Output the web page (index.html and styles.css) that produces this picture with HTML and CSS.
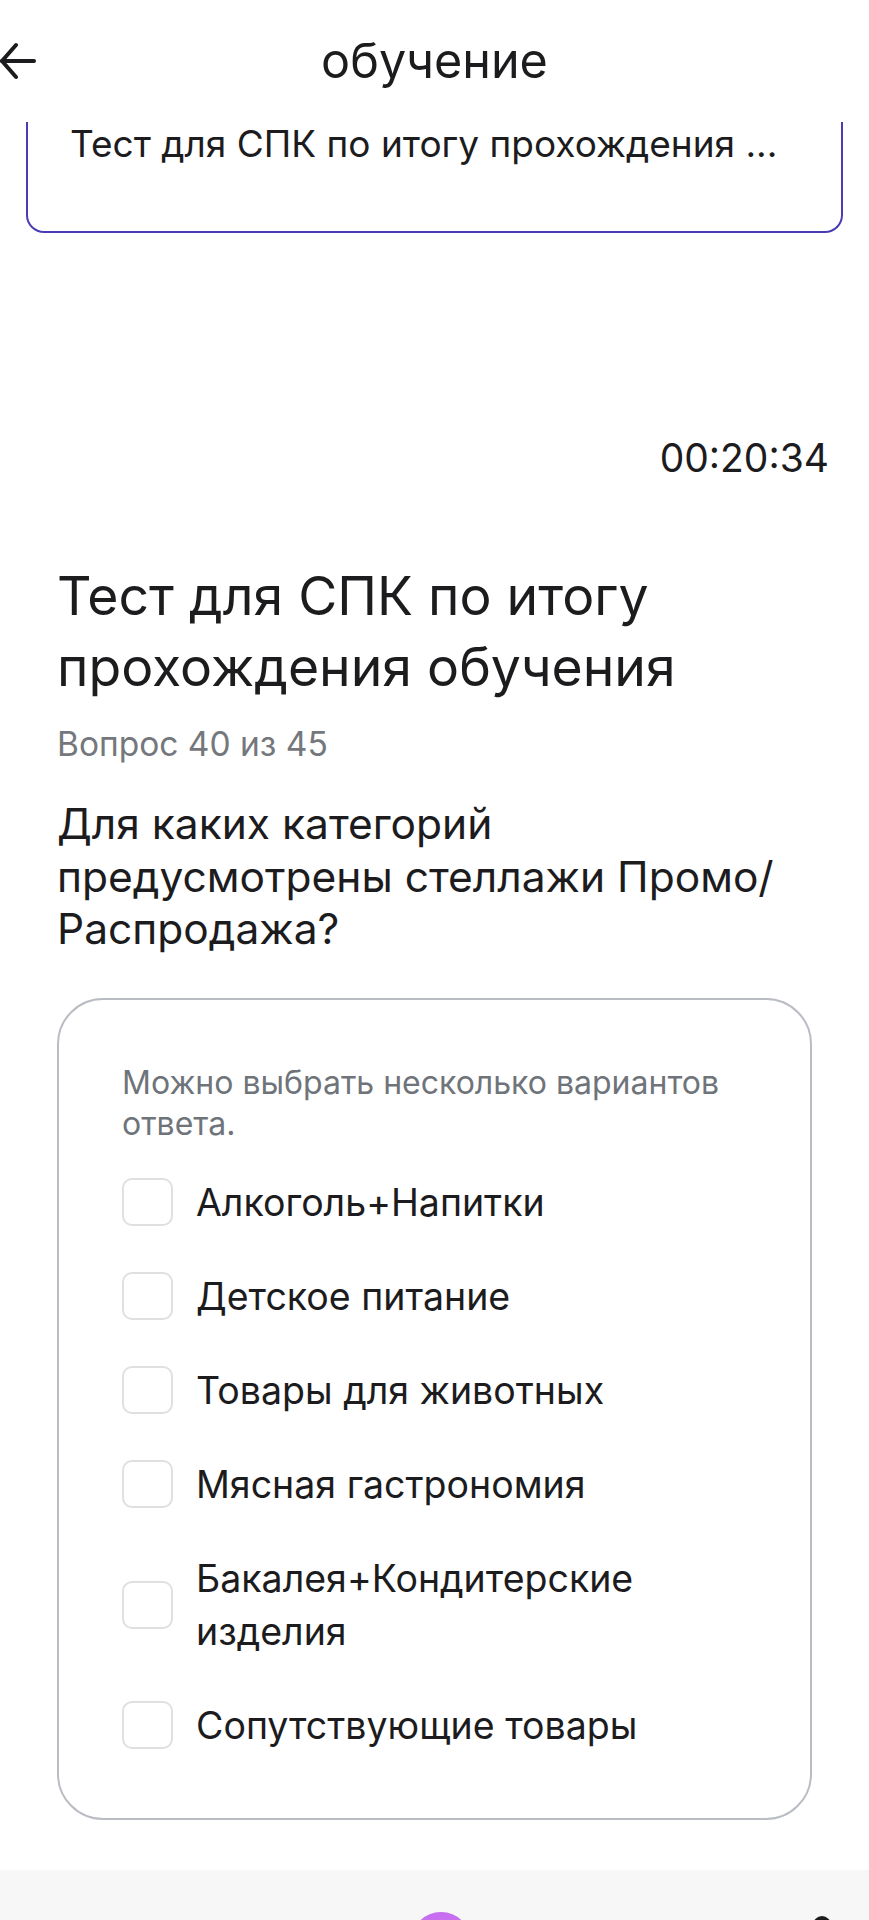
FILE: index.html
```html
<!DOCTYPE html>
<html lang="ru">
<head>
<meta charset="utf-8">
<title>обучение</title>
<link rel="stylesheet" href="styles.css">
</head>
<body>
<div class="screen">
  <header class="topbar">
    <div class="back">
      <svg class="back-icon" width="40" height="40" viewBox="0 0 40 40" fill="none" stroke="#1c1c1e" stroke-width="4" stroke-linecap="round" stroke-linejoin="round">
        <path d="M2 20 H34"/>
        <path d="M16 4 L2 20 L16 36"/>
      </svg>
    </div>
    <h1 class="topbar-title">обучение</h1>
    <div class="spacer"></div>
  </header>

  <div class="course-card">
    <p class="course-name">Тест для СПК по итогу прохождения ...</p>
  </div>

  <div class="timer">00:20:34</div>

  <h2 class="test-title">Тест для СПК по итогу прохождения обучения</h2>
  <div class="progress">Вопрос 40 из 45</div>
  <p class="question">Для каких категорий предусмотрены стеллажи Промо/ Распродажа?</p>

  <div class="answers">
    <p class="hint">Можно выбрать несколько вариантов ответа.</p>
    <ul class="options">
      <li class="option"><span class="checkbox"></span><span class="label">Алкоголь+Напитки</span></li>
      <li class="option"><span class="checkbox"></span><span class="label">Детское питание</span></li>
      <li class="option"><span class="checkbox"></span><span class="label">Товары для животных</span></li>
      <li class="option"><span class="checkbox"></span><span class="label">Мясная гастрономия</span></li>
      <li class="option"><span class="checkbox"></span><span class="label">Бакалея+Кондитерские изделия</span></li>
      <li class="option"><span class="checkbox"></span><span class="label">Сопутствующие товары</span></li>
    </ul>
  </div>

  <footer class="bottombar">
    <span class="fab"></span>
    <span class="side-icon"></span>
  </footer>
</div>
</body>
</html>
```

FILE: styles.css
```css
* {
  box-sizing: border-box;
}

html, body {
  margin: 0;
  padding: 0;
  background: #ffffff;
}

body {
  font-family: Inter, "Noto Sans", Roboto, sans-serif;
  color: #1c1c1e;
}

.screen {
  width: 869px;
  height: 1920px;
  overflow: hidden;
  display: flex;
  flex-direction: column;
}

.topbar {
  height: 122px;
  flex: none;
  display: grid;
  grid-template-columns: 1fr auto 1fr;
  align-items: center;
}

.back {
  display: flex;
  align-items: center;
  height: 122px;
}

.back-icon {
  display: block;
}

.topbar-title {
  margin: 0;
  font-size: 48.5px;
  font-weight: 400;
  line-height: 56px;
  color: #1c1c1e;
}

.course-card {
  margin: 0 26px;
  height: 111px;
  border: 2.5px solid #4a3cb4;
  border-top: none;
  border-radius: 0 0 18px 18px;
  padding: 0 0 0 42px;
  flex: none;
}

.course-name {
  margin: 0;
  font-size: 37px;
  line-height: 44px;
  color: #1c1c1e;
  white-space: nowrap;
}

.timer {
  margin-top: 201px;
  padding-right: 40px;
  text-align: right;
  font-size: 39px;
  line-height: 48px;
  color: #1c1c1e;
}

.test-title {
  margin: 78px 57px 0;
  font-size: 53.5px;
  font-weight: 400;
  line-height: 71px;
  color: #1c1c1e;
}

.progress {
  margin: 22px 57px 0;
  font-size: 33.5px;
  line-height: 40px;
  color: #74777c;
}

.question {
  margin: 34px 57px 0;
  font-size: 42.5px;
  line-height: 52.5px;
  color: #1c1c1e;
}

.answers {
  margin: 42px 57px 0;
  border: 2px solid #b9bdc3;
  border-radius: 46px;
  padding: 62px 63px 66px;
  flex: none;
}

.hint {
  margin: 0;
  font-size: 32px;
  line-height: 41px;
  color: #6f747a;
}

.options {
  list-style: none;
  margin: 32px 0 0;
  padding: 0;
  display: flex;
  flex-direction: column;
  gap: 41px;
}

.option {
  display: flex;
  align-items: center;
  gap: 23px;
}

.checkbox {
  flex: none;
  width: 51px;
  height: 48px;
  border: 2.5px solid #e0e0e2;
  border-radius: 10px;
  background: #ffffff;
}

.label {
  font-size: 37.5px;
  line-height: 53px;
  color: #1c1c1e;
}

.bottombar {
  margin-top: auto;
  height: 50px;
  flex: none;
  background: #f7f7f8;
  display: flex;
  justify-content: center;
  align-items: flex-start;
  padding-top: 42px;
  gap: 342px;
  padding-left: 372px;
}

.fab {
  width: 60px;
  height: 60px;
  border-radius: 50%;
  background: linear-gradient(180deg, #c56cf0 0%, #e48af6 100%);
  flex: none;
}

.side-icon {
  margin-top: 4px;
  width: 18px;
  height: 18px;
  border-radius: 50% 50% 0 0;
  background: #1c1c1e;
  flex: none;
}
```
